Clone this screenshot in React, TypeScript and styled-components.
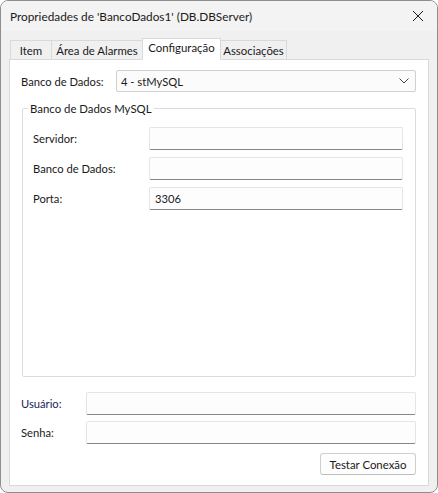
import React from "react";
import styled, { createGlobalStyle } from "styled-components";

const Global = createGlobalStyle`
  html, body { margin: 0; padding: 0; background: #ffffff; }
  * { box-sizing: border-box; }
`;

const FONT = `Lato, "Noto Sans", Arial, sans-serif`;

const Window = styled.div`
  width: 438px;
  height: 493px;
  background: #f0f0f0;
  border: 1px solid #8f8f8f;
  border-radius: 8px;
  display: flex;
  flex-direction: column;
  font-family: ${FONT};
  font-size: 11.2px;
  color: #1a1a1a;
  overflow: hidden;
`;

const TitleBar = styled.div`
  height: 30px;
  display: flex;
  align-items: center;
  justify-content: space-between;
  padding: 0 10px 0 9px;
  background: #f3f3f3;
`;

const TitleText = styled.span`
  font-size: 11.8px;
  color: #1a1a1a;
`;

const CloseButton = styled.div`
  width: 14px;
  height: 14px;
  display: flex;
  align-items: center;
  justify-content: center;
  margin-right: 2px;
`;

const Body = styled.div`
  flex: 1;
  display: flex;
  flex-direction: column;
  padding: 7px 8px 6px 8px;
`;

const TabRow = styled.div`
  display: flex;
  align-items: flex-end;
  height: 22px;
  padding-left: 2px;
  position: relative;
  z-index: 1;
  margin-bottom: -1px;
`;

const Tab = styled.div<{ $active?: boolean; $w: number }>`
  width: ${(p) => p.$w}px;
  height: ${(p) => (p.$active ? 22 : 20)}px;
  border: 1px solid #d9d9d9;
  border-bottom: ${(p) => (p.$active ? "1px solid #ffffff" : "1px solid #d9d9d9")};
  background: ${(p) => (p.$active ? "#ffffff" : "#f0f0f0")};
  margin-left: -1px;
  display: flex;
  align-items: center;
  justify-content: center;
  padding-bottom: ${(p) => (p.$active ? 3 : 0)}px;
  font-size: 11.4px;
  white-space: nowrap;
  color: #1a1a1a;
  position: relative;
  z-index: ${(p) => (p.$active ? 2 : 1)};
`;

const Panel = styled.div`
  flex: 1;
  background: #ffffff;
  border: 1px solid #d9d9d9;
  display: flex;
  flex-direction: column;
  padding: 10px 12px 10px 11px;
`;

const Row = styled.div<{ $labelW: number }>`
  display: grid;
  grid-template-columns: ${(p) => p.$labelW}px 1fr;
  align-items: center;
`;

const Label = styled.span<{ $navy?: boolean }>`
  color: ${(p) => (p.$navy ? "#20245e" : "#1a1a1a")};
  white-space: nowrap;
`;

const Combo = styled.div`
  height: 22px;
  border: 1px solid #d0d0d0;
  border-radius: 2px;
  background: #fbfbfb;
  display: flex;
  align-items: center;
  justify-content: space-between;
  padding: 0 6px 0 4px;
  color: #1a1a1a;
`;

const GroupBox = styled.fieldset`
  flex: 1;
  margin: 10px 0 0 1px;
  border: 1px solid #dcdcdc;
  border-radius: 2px;
  padding: 12px 12px 0 10px;
  display: flex;
  flex-direction: column;
  gap: 7px;
  min-width: 0;
`;

const Legend = styled.legend`
  padding: 0 2px;
  margin-left: -5px;
  color: #1a1a1a;
  font-size: 11.4px;
`;

const TextInput = styled.div`
  height: 23px;
  background: #fdfdfd;
  border: 1px solid #e5e5e5;
  border-bottom: 1px solid #868686;
  border-radius: 2px;
  display: flex;
  align-items: center;
  padding: 0 5px;
  color: #1a1a1a;
`;

const BottomFields = styled.div`
  display: flex;
  flex-direction: column;
  gap: 6px;
  margin-top: 15px;
`;

const ButtonRow = styled.div`
  display: flex;
  justify-content: flex-end;
  margin-top: 9px;
`;

const Button = styled.button`
  width: 96px;
  height: 22px;
  background: #fdfdfd;
  border: 1px solid #d0d0d0;
  border-bottom-color: #bdbdbd;
  border-radius: 3px;
  font-family: ${FONT};
  font-size: 11.4px;
  color: #1a1a1a;
  padding: 0;
  display: flex;
  align-items: center;
  justify-content: center;
`;

export default function App() {
  return (
    <>
      <Global />
      <Window>
        <TitleBar>
          <TitleText>Propriedades de 'BancoDados1' (DB.DBServer)</TitleText>
          <CloseButton>
            <svg width="12" height="12" viewBox="0 0 12 12">
              <path d="M1 1 L11 11 M11 1 L1 11" stroke="#1a1a1a" strokeWidth="1" fill="none" />
            </svg>
          </CloseButton>
        </TitleBar>
        <Body>
          <TabRow>
            <Tab $w={42}>Item</Tab>
            <Tab $w={92}>Área de Alarmes</Tab>
            <Tab $w={79} $active>Configuração</Tab>
            <Tab $w={67}>Associações</Tab>
          </TabRow>
          <Panel>
            <Row $labelW={95}>
              <Label>Banco de Dados:</Label>
              <Combo>
                <span>4 - stMySQL</span>
                <svg width="10" height="6" viewBox="0 0 10 6">
                  <path d="M0.5 0.5 L5 5 L9.5 0.5" stroke="#444" strokeWidth="1" fill="none" />
                </svg>
              </Combo>
            </Row>
            <GroupBox>
              <Legend>Banco de Dados MySQL</Legend>
              <Row $labelW={116}>
                <Label>Servidor:</Label>
                <TextInput />
              </Row>
              <Row $labelW={116}>
                <Label>Banco de Dados:</Label>
                <TextInput />
              </Row>
              <Row $labelW={116}>
                <Label>Porta:</Label>
                <TextInput>3306</TextInput>
              </Row>
            </GroupBox>
            <BottomFields>
              <Row $labelW={65}>
                <Label $navy>Usuário:</Label>
                <TextInput />
              </Row>
              <Row $labelW={65}>
                <Label>Senha:</Label>
                <TextInput />
              </Row>
            </BottomFields>
            <ButtonRow>
              <Button>Testar Conexão</Button>
            </ButtonRow>
          </Panel>
        </Body>
      </Window>
    </>
  );
}
